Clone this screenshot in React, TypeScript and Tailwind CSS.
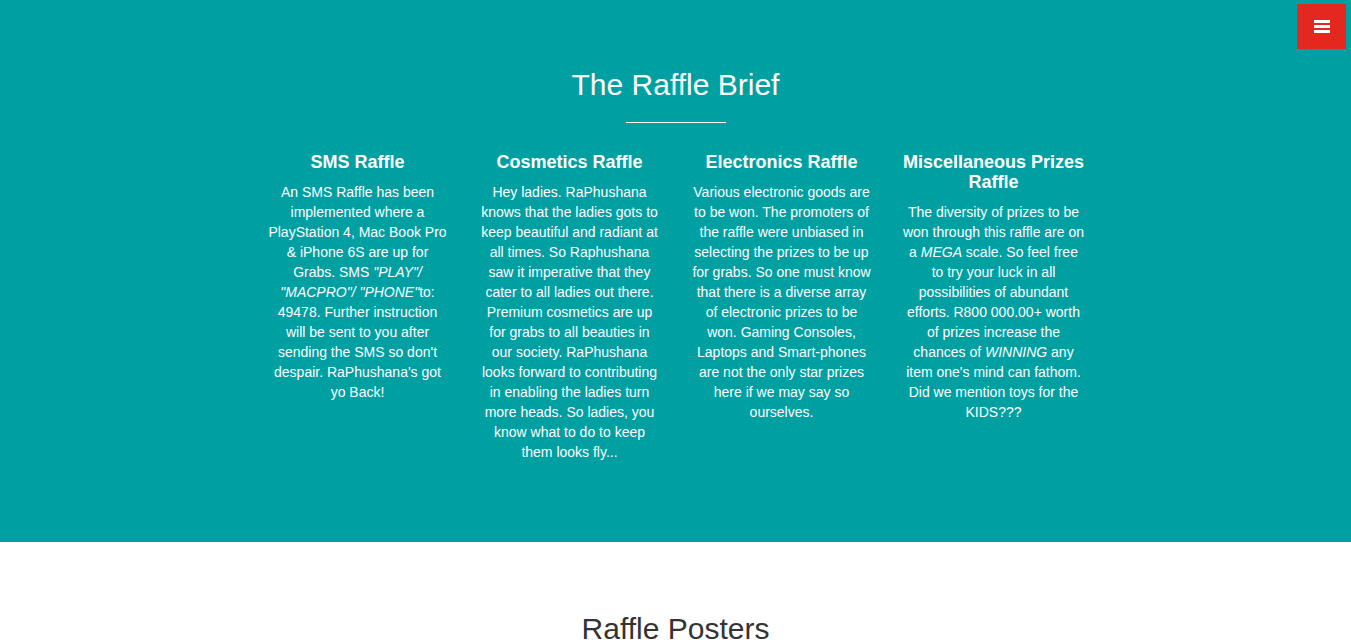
import React from 'react';

const TEAL = '#00a0a2';

interface Raffle {
  title: string;
  body: React.ReactNode;
}

const raffles: Raffle[] = [
  {
    title: 'SMS Raffle',
    body: (
      <>
        An SMS Raffle has been implemented where a PlayStation 4, Mac Book Pro &amp; iPhone 6S are up for Grabs. SMS{' '}
        <em>"PLAY"/ "MACPRO"/ "PHONE"</em>to: 49478. Further instruction will be sent to you after sending the SMS so
        don't despair. RaPhushana's got yo Back!
      </>
    ),
  },
  {
    title: 'Cosmetics Raffle',
    body: (
      <>
        Hey ladies. RaPhushana knows that the ladies gots to keep beautiful and radiant at all times. So Raphushana saw
        it imperative that they cater to all ladies out there. Premium cosmetics are up for grabs to all beauties in our
        society. RaPhushana looks forward to contributing in enabling the ladies turn more heads. So ladies, you know
        what to do to keep them looks fly...
      </>
    ),
  },
  {
    title: 'Electronics Raffle',
    body: (
      <>
        Various electronic goods are to be won. The promoters of the raffle were unbiased in selecting the prizes to be
        up for grabs. So one must know that there is a diverse array of electronic prizes to be won. Gaming Consoles,
        Laptops and Smart-phones are not the only star prizes here if we may say so ourselves.
      </>
    ),
  },
  {
    title: 'Miscellaneous Prizes Raffle',
    body: (
      <>
        The diversity of prizes to be won through this raffle are on a <em>MEGA</em> scale. So feel free to try your
        luck in all possibilities of abundant efforts. R800 000.00+ worth of prizes increase the chances of{' '}
        <em>WINNING</em> any item one's mind can fathom. Did we mention toys for the KIDS???
      </>
    ),
  },
];

export default function App() {
  return (
    <div className="min-h-screen bg-white font-['Liberation_Sans',Arial,sans-serif]">
      {/* Menu toggle */}
      <button className="fixed top-[4px] right-[5px] w-[49px] h-[45px] bg-[#e2281f] flex flex-col items-center justify-center gap-[2px] z-10">
        <span className="block w-[16px] h-[3px] bg-white" />
        <span className="block w-[16px] h-[3px] bg-white" />
        <span className="block w-[16px] h-[3px] bg-white" />
      </button>

      {/* Raffle brief */}
      <section className="pt-[68px] pb-[80px] text-white text-center" style={{ background: TEAL }}>
        <h2 className="text-[30px] leading-[33px]">The Raffle Brief</h2>
        <div className="mx-auto mt-[21px] w-[100px] h-px bg-white" />
        <div className="mx-auto mt-[30px] w-[848px] grid grid-cols-4">
          {raffles.map((r) => (
            <div key={r.title} className="px-[15px]">
              <h3 className="text-[18px] leading-[1.1] font-bold">{r.title}</h3>
              <p className="mt-[9px] text-[14px] leading-[20px]">{r.body}</p>
            </div>
          ))}
        </div>
      </section>

      {/* Posters */}
      <section className="pt-[70px] pb-[60px] text-center">
        <h2 className="text-[30px] leading-[33px] text-[#333]">Raffle Posters</h2>
      </section>
    </div>
  );
}
